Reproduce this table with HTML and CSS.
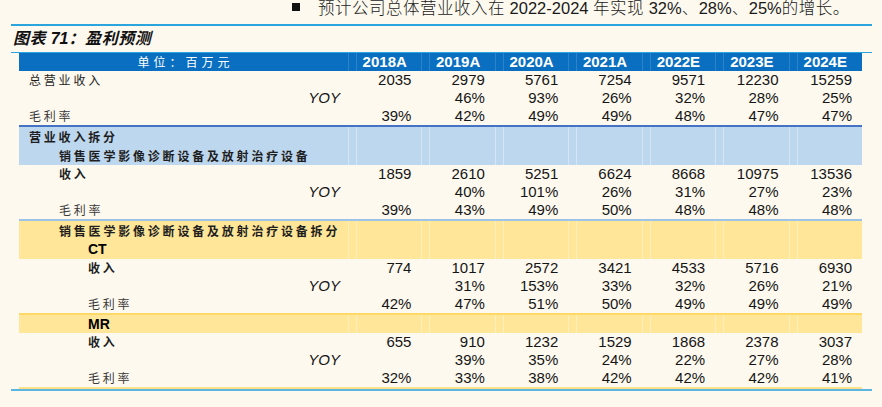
FILE: index.html
```html
<!DOCTYPE html>
<html lang="zh-CN">
<head>
<meta charset="utf-8">
<title>盈利预测</title>
<link rel="stylesheet" href="styles.css">
</head>
<body>
<p class="lead"><span class="bullet"></span><span class="cjk">预计公司总体营业收入在</span> 2022-2024 <span class="cjk">年实现</span> 32%<span class="cjk">、</span>28%<span class="cjk">、</span>25%<span class="cjk">的增长。</span></p>
<div class="figure">
  <div class="rule-top"></div>
  <div class="title"><span class="cjk-t">图表</span> 71<span class="cjk-t">：盈利预测</span></div>
  <div class="rule-mid"></div>
  <div class="table">
    <div class="row hd"><span class="lbl center">单位：百万元</span><span>2018A</span><span>2019A</span><span>2020A</span><span>2021A</span><span>2022E</span><span>2023E</span><span>2024E</span></div>

    <div class="row"><span class="lbl l0">总营业收入</span><span>2035</span><span>2979</span><span>5761</span><span>7254</span><span>9571</span><span>12230</span><span>15259</span></div>
    <div class="row"><span class="yoy">YOY</span><span></span><span>46%</span><span>93%</span><span>26%</span><span>32%</span><span>28%</span><span>25%</span></div>
    <div class="row"><span class="lbl l0 light">毛利率</span><span>39%</span><span>42%</span><span>49%</span><span>49%</span><span>48%</span><span>47%</span><span>47%</span></div>

    <div class="row band blue first"><span class="lbl l0 b">营业收入拆分</span><span></span><span></span><span></span><span></span><span></span><span></span><span></span></div>
    <div class="row band blue"><span class="lbl l1 b">销售医学影像诊断设备及放射治疗设备</span><span></span><span></span><span></span><span></span><span></span><span></span><span></span></div>
    <div class="row"><span class="lbl l1 b">收入</span><span>1859</span><span>2610</span><span>5251</span><span>6624</span><span>8668</span><span>10975</span><span>13536</span></div>
    <div class="row"><span class="yoy">YOY</span><span></span><span>40%</span><span>101%</span><span>26%</span><span>31%</span><span>27%</span><span>23%</span></div>
    <div class="row"><span class="lbl l1 light">毛利率</span><span>39%</span><span>43%</span><span>49%</span><span>50%</span><span>48%</span><span>48%</span><span>48%</span></div>

    <div class="row band yellow first"><span class="lbl l1 b">销售医学影像诊断设备及放射治疗设备拆分</span><span></span><span></span><span></span><span></span><span></span><span></span><span></span></div>
    <div class="row band yellow"><span class="lbl l2 latin">CT</span><span></span><span></span><span></span><span></span><span></span><span></span><span></span></div>
    <div class="row"><span class="lbl l2 b">收入</span><span>774</span><span>1017</span><span>2572</span><span>3421</span><span>4533</span><span>5716</span><span>6930</span></div>
    <div class="row"><span class="yoy">YOY</span><span></span><span>31%</span><span>153%</span><span>33%</span><span>32%</span><span>26%</span><span>21%</span></div>
    <div class="row"><span class="lbl l2 light">毛利率</span><span>42%</span><span>47%</span><span>51%</span><span>50%</span><span>49%</span><span>49%</span><span>49%</span></div>

    <div class="row band yellow mr"><span class="lbl l2 latin">MR</span><span></span><span></span><span></span><span></span><span></span><span></span><span></span></div>
    <div class="row"><span class="lbl l2 b">收入</span><span>655</span><span>910</span><span>1232</span><span>1529</span><span>1868</span><span>2378</span><span>3037</span></div>
    <div class="row"><span class="yoy">YOY</span><span></span><span>39%</span><span>35%</span><span>24%</span><span>22%</span><span>27%</span><span>28%</span></div>
    <div class="row last"><span class="lbl l2 light">毛利率</span><span>32%</span><span>33%</span><span>38%</span><span>42%</span><span>42%</span><span>42%</span><span>41%</span></div>
  </div>
  <div class="rule-bottom"></div>
</div>
</body>
</html>
```

FILE: styles.css
```css
html, body {
  margin: 0;
  padding: 0;
}

body {
  background: #fdf9ef;
  width: 882px;
  height: 407px;
  overflow: hidden;
  font-family: "Liberation Sans", Arial, sans-serif;
  color: #111;
}

.lead {
  margin: -1px 0 0;
  padding-left: 292px;
  height: 15px;
  font-size: 16.5px;
  line-height: 17px;
  white-space: nowrap;
  color: #1a1a1a;
}

.bullet {
  display: inline-block;
  width: 8px;
  height: 8px;
  background: #111;
  margin-right: 18px;
  vertical-align: 3px;
}

.cjk {
  font-family: "Noto Sans CJK SC", sans-serif;
  font-weight: 300;
  letter-spacing: 0.5px;
}

.figure {
  margin: 10px 0 0 11px;
  width: 861px;
}

.rule-top {
  height: 2px;
  background: #2aa5dd;
}

.title {
  height: 20px;
  padding: 1px 0 5px 2px;
  font-size: 16px;
  line-height: 20px;
  font-weight: 700;
  font-style: italic;
  color: #111;
}

.cjk-t {
  font-family: "Noto Sans CJK SC", sans-serif;
  letter-spacing: 0.6px;
}

.rule-mid {
  height: 1px;
  background: #2aa5dd;
}

.table {
  margin-left: 8px;
  width: 843px;
}

.row {
  display: grid;
  grid-template-columns: 329px repeat(7, 1fr);
  height: 18px;
  line-height: 18px;
  font-size: 15px;
  white-space: nowrap;
}

.row > span {
  text-align: right;
  padding-right: 10px;
  color: #151515;
}

.row > span.lbl,
.row > span.yoy {
  padding-right: 0;
}

.lbl {
  text-align: left !important;
  font-family: "Noto Sans CJK SC", sans-serif;
  font-size: 12px;
  letter-spacing: 2.8px;
  color: #1e1e1e !important;
}

.lbl.b {
  font-weight: 700;
}

.lbl.light {
  font-weight: 400;
  color: #3a3a3a !important;
}

.lbl.latin {
  font-family: "Liberation Sans", Arial, sans-serif;
  font-size: 14px;
  font-weight: 700;
  letter-spacing: 0;
  color: #000 !important;
}

.l0 { padding-left: 10px; }
.l1 { padding-left: 40px; }
.l2 { padding-left: 69px; }

.yoy {
  text-align: right;
  font-style: italic;
  font-size: 15px;
  padding-right: 8px !important;
  color: #111;
}

.hd {
  background: #0a6fc0;
  font-weight: 700;
}

.hd > span {
  color: #fff !important;
  text-align: center;
  padding-right: 0;
}

.hd > span.center {
  text-align: center !important;
  color: #fff !important;
  font-weight: 400;
  letter-spacing: 4px;
  padding-left: 4px;
}

.hd > span + span {
  background-image:
    linear-gradient(to right,
      rgba(255, 255, 255, 0.14) 0, rgba(255, 255, 255, 0.14) 1px,
      transparent 1px, transparent 8px,
      rgba(255, 255, 255, 0.14) 8px, rgba(255, 255, 255, 0.14) 9px,
      transparent 9px);
}

.band {
  height: 19px;
  line-height: 19px;
}

.band > span + span {
  background-image:
    linear-gradient(to right,
      rgba(255, 255, 255, 0.35) 0, rgba(255, 255, 255, 0.35) 1px,
      transparent 1px, transparent 8px,
      rgba(255, 255, 255, 0.35) 8px, rgba(255, 255, 255, 0.35) 9px,
      transparent 9px);
}

.band.blue {
  background: #bdd7ee;
}

.band.blue.first {
  border-top: 2px solid #4472c4;
}

.band.yellow {
  background: #ffe699;
}

.band.yellow.first {
  border-top: 2px solid #9dc3e6;
}

.band.mr {
  height: 18px;
  line-height: 18px;
  border-top: 2px solid #ffd966;
}

.row.last {
  border-bottom: 2px solid #ffe08a;
}

.rule-bottom {
  height: 2px;
  background: #5cb6e2;
}
```
